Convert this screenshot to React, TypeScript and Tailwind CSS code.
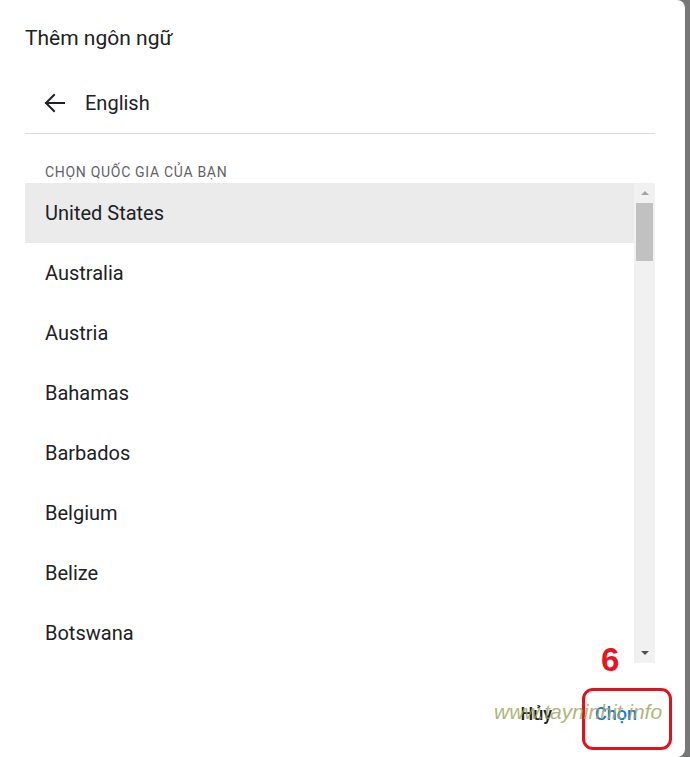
const COUNTRIES = [
  'United States',
  'Australia',
  'Austria',
  'Bahamas',
  'Barbados',
  'Belgium',
  'Belize',
  'Botswana',
];

function BackArrow() {
  return (
    <svg width="24" height="24" viewBox="0 0 24 24" fill="none" stroke="#202124" strokeWidth="2" strokeLinecap="square">
      <path d="M3 12h18" />
      <path d="M11 4l-8 8 8 8" />
    </svg>
  );
}

export default function App() {
  return (
    <div
      className="flex h-[757px] w-[690px] overflow-hidden bg-[#777777]"
      style={{ fontFamily: 'Roboto, "Noto Sans", sans-serif' }}
    >
      <div className="relative flex h-full w-[685px] flex-col rounded-r-[8px] bg-white pl-[25px] pr-[30px]">
        {/* Title */}
        <h2 className="pt-[26px] text-[21px] leading-[24px] font-normal text-[#202124]">Thêm ngôn ngữ</h2>

        {/* Selected language */}
        <div className="mt-[29px] flex h-[48px] items-center pl-[18px]">
          <BackArrow />
          <span className="ml-[18px] text-[20px] text-[#202124]">English</span>
        </div>
        <div className="mt-[6px] h-px bg-[#dadce0]" />

        {/* Country list */}
        <div className="mt-[30px] pl-[20px] text-[14px] leading-[16px] font-normal tracking-[0.7px] text-[#5f6368] uppercase">
          Chọn quốc gia của bạn
        </div>
        <div className="mt-[3px] flex h-[480px]">
          <div className="flex-1 overflow-hidden">
            {COUNTRIES.map((c, i) => (
              <div
                key={c}
                className={
                  i === 0
                    ? 'flex h-[60px] items-center bg-[#ebebeb] pl-[20px] text-[20px] text-[#202124]'
                    : 'flex h-[60px] items-center pl-[20px] text-[20px] text-[#202124]'
                }
              >
                {c}
              </div>
            ))}
          </div>
          {/* Scrollbar */}
          <div className="flex w-[21px] flex-col bg-[#f1f1f1]">
            <div className="flex h-[20px] items-center justify-center">
              <div className="h-0 w-0 border-x-[4px] border-b-[4px] border-x-transparent border-b-[#a3a3a3]" />
            </div>
            <div className="mx-[2px] h-[58px] bg-[#c1c1c1]" />
            <div className="flex-1" />
            <div className="flex h-[20px] items-center justify-center">
              <div className="h-0 w-0 border-x-[4px] border-t-[4px] border-x-transparent border-t-[#505050]" />
            </div>
          </div>
        </div>

        {/* Actions */}
        <div className="mt-[32px] flex justify-end gap-[11px] pr-[2px]">
          <button className="h-[36px] px-4 text-[18px] font-medium text-[#202124]">Hủy</button>
          <button className="h-[36px] px-4 text-[18px] font-medium text-[#1a73e8]">Chọn</button>
        </div>

        {/* Annotation overlays */}
        <div
          className="absolute top-[640px] left-[601px] text-[33px] leading-[40px] font-bold text-[#e8141f]"
          style={{ fontFamily: '"Liberation Sans", Arial, sans-serif' }}
        >
          6
        </div>
        <div className="absolute top-[688px] left-[582px] h-[62px] w-[90px] rounded-[11px] border-[3px] border-[#e3101d]" />
        <div
          className="pointer-events-none absolute top-[699px] left-[494px] text-[21px] leading-[26px] italic text-[#9ea45a] opacity-80"
          style={{ fontFamily: '"Liberation Sans", Arial, sans-serif' }}
        >
          www.tayninhit.info
        </div>
      </div>
      <div className="flex-1" />
    </div>
  );
}
